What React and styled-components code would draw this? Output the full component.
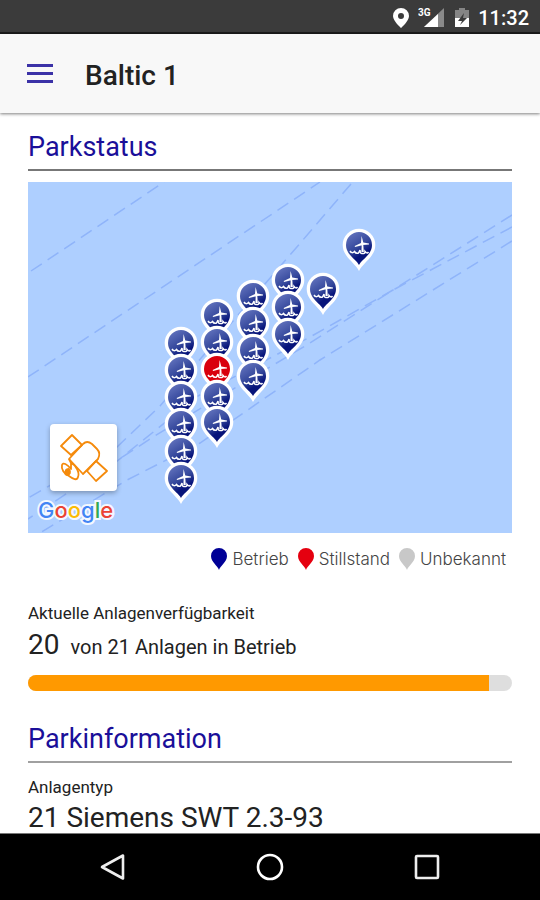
import React from "react";
import styled, { createGlobalStyle } from "styled-components";

const GlobalStyle = createGlobalStyle`
  *, *::before, *::after { box-sizing: border-box; }
  body { margin: 0; background: #fff; color: #222; font-family: Roboto, "Liberation Sans", sans-serif; }
  button { padding: 0; border: 0; background: none; font: inherit; cursor: pointer; }
  svg { display: block; }
`;

const Screen = styled.div`
  display: flex;
  flex-direction: column;
  height: 100vh;
  overflow: hidden;
`;

const StatusBar = styled.div`
  flex: none;
  display: flex;
  align-items: center;
  justify-content: flex-end;
  height: 34px;
  padding: 3px 11px 0 0;
  background: #3b3b3b;
  border-bottom: 2px solid #1c1c1c;
  color: #fff;
`;

const StatusIcon = styled.svg`
  width: ${(p) => p.$width}px;
  height: 20px;
  margin-right: ${(p) => p.$gap}px;
`;

const Network = styled.text`
  font: 700 10px Roboto, sans-serif;
  fill: #fff;
`;

const Clock = styled.time`
  font-size: 20px;
  font-weight: 500;
  line-height: 24px;
`;

const Header = styled.header`
  flex: none;
  display: flex;
  align-items: center;
  gap: 31px;
  height: 79px;
  padding: 0 26px;
  background: #f8f8f8;
  box-shadow: 0 1px 3px rgba(0, 0, 0, 0.5);
  z-index: 1;
`;

const MenuButton = styled.button`
  width: 28px;
  height: 20px;
`;

const Title = styled.h1`
  margin: 0;
  padding-top: 4px;
  font-size: 28px;
  font-weight: 500;
  line-height: 32px;
`;

const Content = styled.main`
  flex: 1;
  min-height: 0;
  padding: 0 28px;
  overflow: hidden auto;
  scrollbar-width: none;
`;

const SectionTitle = styled.h2`
  margin: 0 0 ${(p) => p.$below}px;
  padding: ${(p) => p.$above}px 0 6px;
  border-bottom: 2px solid ${(p) => p.$rule};
  color: #1a0f99;
  font-size: 27px;
  font-weight: 400;
  line-height: 32px;
`;

const MapView = styled.div`
  position: relative;
  aspect-ratio: 484 / 351;
  overflow: hidden;
  background: #aecfff;
`;

const Routes = styled.svg`
  width: 100%;
  height: 100%;
  fill: none;
  stroke: #8fb4fa;
  stroke-width: 1.5;
  stroke-dasharray: 13 7;
`;

const Pin = styled.button`
  position: absolute;
  left: ${(p) => (p.$x / 484) * 100}%;
  top: ${(p) => (p.$y / 351) * 100}%;
  width: 34px;
  height: 44px;
  margin: -17px 0 0 -17px;
`;

const MapCorner = styled.div`
  position: absolute;
  left: 10px;
  bottom: 9px;
`;

const SatelliteButton = styled.button`
  display: grid;
  place-items: center;
  width: 67px;
  height: 67px;
  margin-left: 12px;
  border-radius: 4px;
  background: #fff;
  box-shadow: 0 2px 5px rgba(0, 0, 0, 0.3);
`;

const GoogleMark = styled.a`
  display: block;
  margin-top: 5px;
  font: 500 22px/28px Inter, sans-serif;
  text-decoration: none;
  -webkit-text-stroke: 4px #f4f8ff;
  paint-order: stroke fill;
`;

const Letter = styled.span`
  color: ${(p) => p.$color};
`;

const Legend = styled.ul`
  display: flex;
  justify-content: flex-end;
  gap: 9px;
  margin: 14px 0 32px;
  padding: 0 6px 0 0;
  list-style: none;
`;

const LegendItem = styled.li`
  display: flex;
  align-items: center;
  gap: 5px;
  color: #444;
  font: 300 17px/24px Inter, sans-serif;
`;

const Label = styled.div`
  font-size: 17px;
  line-height: 20px;
`;

const Figure = styled.div`
  margin-top: ${(p) => p.$above}px;
  font-size: 28px;
  line-height: 32px;
`;

const Unit = styled.span`
  margin-left: 11px;
  font-size: 20px;
`;

const Availability = styled.progress`
  display: block;
  width: 100%;
  height: 16px;
  margin: 12px 0 0;
  border: 0;
  border-radius: 8px;
  overflow: hidden;
  appearance: none;
  background: #dedede;
  &::-webkit-progress-bar { background: #dedede; }
  &::-webkit-progress-value { background: #ff9900; }
  &::-moz-progress-bar { background: #ff9900; }
`;

const NavBar = styled.nav`
  flex: none;
  display: flex;
  justify-content: center;
  gap: 129px;
  height: 67px;
  background: #000;
  border-top: 1px solid #777;
`;

const NavButton = styled.button`
  display: grid;
  place-items: center;
  width: 28px;
`;

const columns = [
  { x: 153, rows: [161, 188, 215, 242, 269, 296] },
  { x: 189, rows: [133, 160, 187, 214, 240] },
  { x: 225, rows: [114, 141, 168, 194] },
  { x: 260, rows: [98, 125, 152] },
  { x: 295, rows: [107] },
  { x: 331, rows: [63] },
];

const turbines = columns.flatMap((column, c) =>
  column.rows.map((y, r) => ({ x: column.x, y, stopped: c === 1 && r === 2 }))
);

const states = [
  { name: "Betrieb", color: "#000096" },
  { name: "Stillstand", color: "#e5000f" },
  { name: "Unbekannt", color: "#c8c8c8" },
];

const brand = [
  ["G", "#4285f4"],
  ["o", "#ea4335"],
  ["o", "#fbbc05"],
  ["g", "#4285f4"],
  ["l", "#34a853"],
  ["e", "#ea4335"],
];

function Turbine({ x, y, stopped, number }) {
  return (
    <Pin $x={x} $y={y} aria-label={`Anlage ${number}`}>
      <svg width="34" height="44" viewBox="-17 -17 34 44">
        <path
          d="M0 26 C-3 20-9 16-13 10 C-15 7-16.3 4-16.3 0 A16.3 16.3 0 0 1 16.3 0 C16.3 4 15 7 13 10 C9 16 3 20 0 26Z"
          fill="#fff"
        />
        <path
          d="M0 20 C-2 16-7 13-10.5 8 C-12 5.5-13 3-13 0 A13 13 0 0 1 13 0 C13 3 12 5.5 10.5 8 C7 13 2 16 0 20Z"
          fill={stopped ? "#d9000d" : "url(#pinBlue)"}
        />
        <path
          d="M2.6 -9 L4.3 -2.5 L10 -1.6 V-.6 L4 0 L-4 2 L-4.3 1 L2 -2Z M2.7 0 H4.3 L4.8 7 H2.4Z"
          fill="#fff"
        />
        <path
          d="M-9 6 Q-7 9-4.5 6.5 Q-3 9-.5 8 L1 5 Q1 9 3.5 8.5 Q6 9 6 6.5 Q8 9 9.5 7"
          fill="none"
          stroke="#fff"
          strokeWidth="1.5"
        />
      </svg>
    </Pin>
  );
}

function SatelliteIcon() {
  return (
    <svg width="48" height="48" viewBox="0 0 48 48" fill="none" stroke="#f58a0b" strokeWidth="1.8" strokeLinejoin="round">
      <path d="M12 1 L22 11 L11 21 L1 12Z M36 27 L47 37 L36 47 L27 37Z" />
      <path d="M9 25 L23 10 Q27 6 32 10 L37 15 Q41 19 38 25 L23 40Z" />
      <path d="M9 25 L11 29 M11 29 C16 31 20 39 18 43 C17 47 13 45 9 42 C4 40 1 35 2 31 C3 28 7 30 11 35Z" />
      <path d="M9 35 C5 35 4 40 7 41 C10 41 11 38 9 35" fill="#f58a0b" />
    </svg>
  );
}

export default function App() {
  return (
    <Screen>
      <GlobalStyle />
      <StatusBar>
        <StatusIcon $width={16} $gap={9} viewBox="0 0 16 20" aria-label="Standort">
          <path d="M8 0a8 8 0 0 1 8 8c0 5-8 12-8 12S0 13 0 8a8 8 0 0 1 8-8Zm0 5a3 3 0 1 0 0 6 3 3 0 0 0 0-6Z" fill="#fff" />
        </StatusIcon>
        <StatusIcon $width={26} $gap={11} viewBox="0 0 26 20">
          <path d="M6 19 L26 0V19Z" fill="#8a8a8a" />
          <path d="M6 19 L20 6V19Z" fill="#fff" />
          <Network x="0" y="8">3G</Network>
        </StatusIcon>
        <StatusIcon $width={14} $gap={9} viewBox="0 0 14 20" aria-label="Akku">
          <path d="M4 0h6v2h4v9H0V2h4Z" fill="#858585" />
          <path d="M0 10h14v9H0Z" fill="#fff" />
          <path d="M9 5 3 13h4l-2 4 7-7H8Z" fill="#3b3b3b" />
        </StatusIcon>
        <Clock>11:32</Clock>
      </StatusBar>

      <Header>
        <MenuButton aria-label="Menü">
          <svg width="28" height="20" viewBox="0 0 28 20" fill="#1a0f99">
            <path d="M1 0h26v3H1z M1 8h26v3H1z M1 16h26v3H1z" fillOpacity="0.85" />
          </svg>
        </MenuButton>
        <Title>Baltic 1</Title>
      </Header>

      <Content>
        <SectionTitle $above={18} $below={11} $rule="#777">Parkstatus</SectionTitle>
        <MapView>
          <Routes viewBox="0 0 484 351">
            <defs>
              <linearGradient id="pinBlue" x1="0" y1="0" x2="0.5" y2="1">
                <stop offset="0" stopColor="#6b7bc4" />
                <stop offset="0.55" stopColor="#34479b" />
                <stop offset="0.8" stopColor="#07147a" />
              </linearGradient>
            </defs>
            <path d="M3 89 L136 0" />
            <path d="M0 195 L292 0" />
            <path d="M323 2 L262 73 L205 139 L132 224 L88 266 L0 316" />
            <path d="M484 33 L365 108 L282 155 L170 214 L88 280" />
            <path d="M484 45 L365 108 L282 161 L125 255 L0 337" />
            <path d="M484 59 L292 178 L172 261 L99 298 L12 351" />
          </Routes>
          {turbines.map((turbine, i) => (
            <Turbine key={i} number={i + 1} {...turbine} />
          ))}
          <MapCorner>
            <SatelliteButton aria-label="Satellitenansicht">
              <SatelliteIcon />
            </SatelliteButton>
            <GoogleMark href="#google">
              {brand.map(([letter, color], i) => (
                <Letter key={i} $color={color}>{letter}</Letter>
              ))}
            </GoogleMark>
          </MapCorner>
        </MapView>

        <Legend>
          {states.map(({ name, color }) => (
            <LegendItem key={name}>
              <svg width="16" height="22" viewBox="0 0 16 22" fill={color}>
                <path d="M8 22 C7 18 0 14 0 8 A8 8 0 0 1 16 8 C16 14 9 18 8 22Z" />
              </svg>
              {name}
            </LegendItem>
          ))}
        </Legend>

        <Label id="availability">Aktuelle Anlagenverfügbarkeit</Label>
        <Figure $above={6}>
          20<Unit>von 21 Anlagen in Betrieb</Unit>
        </Figure>
        <Availability value={20} max={21} aria-labelledby="availability" />

        <SectionTitle $above={32} $below={14} $rule="#a0a0a0">Parkinformation</SectionTitle>
        <Label>Anlagentyp</Label>
        <Figure $above={5}>21 Siemens SWT 2.3-93</Figure>
      </Content>

      <NavBar>
        <NavButton aria-label="Zurück">
          <svg width="28" height="28" viewBox="0 0 28 28" fill="none" stroke="#eee" strokeWidth="2.6" strokeLinejoin="round">
            <path d="M24 2.5V25.5L3 14Z" />
          </svg>
        </NavButton>
        <NavButton aria-label="Startseite">
          <svg width="28" height="28" viewBox="0 0 28 28" fill="none" stroke="#fff" strokeWidth="2.6">
            <circle cx="14" cy="14" r="12" />
          </svg>
        </NavButton>
        <NavButton aria-label="Übersicht">
          <svg width="28" height="28" viewBox="0 0 28 28" fill="none" stroke="#eee" strokeWidth="2.6">
            <rect x="3" y="3" width="22" height="22" rx="1" />
          </svg>
        </NavButton>
      </NavBar>
    </Screen>
  );
}
